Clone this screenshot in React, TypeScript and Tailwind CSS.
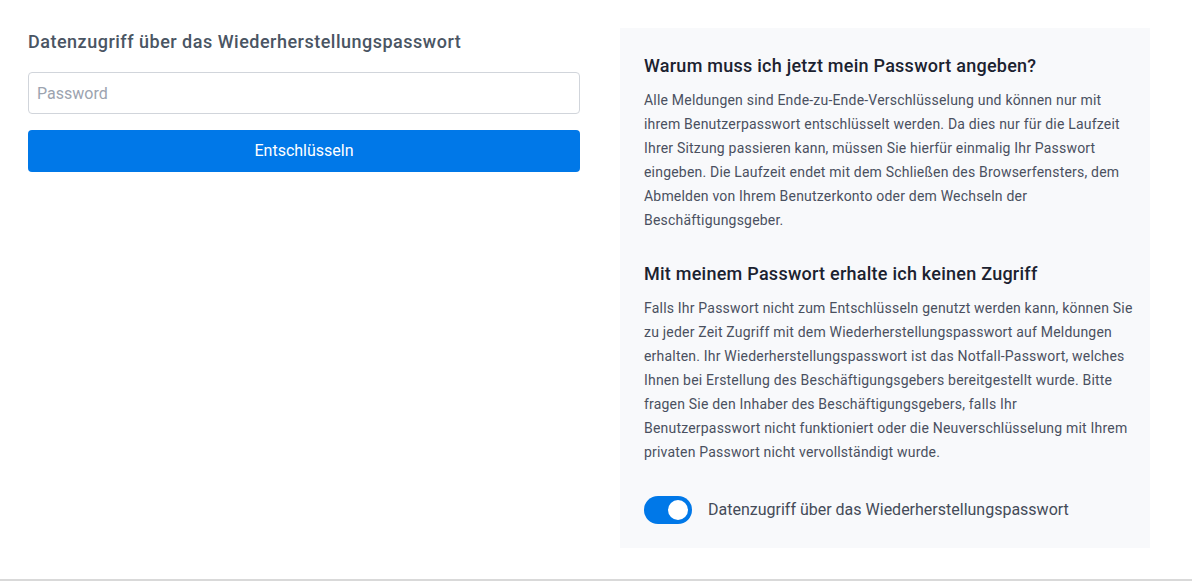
import React, { useState } from "react";

const para1 = [
  "Alle Meldungen sind Ende-zu-Ende-Verschlüsselung und können nur mit",
  "ihrem Benutzerpasswort entschlüsselt werden. Da dies nur für die Laufzeit",
  "Ihrer Sitzung passieren kann, müssen Sie hierfür einmalig Ihr Passwort",
  "eingeben. Die Laufzeit endet mit dem Schließen des Browserfensters, dem",
  "Abmelden von Ihrem Benutzerkonto oder dem Wechseln der",
  "Beschäftigungsgeber.",
];

const para2 = [
  "Falls Ihr Passwort nicht zum Entschlüsseln genutzt werden kann, können Sie",
  "zu jeder Zeit Zugriff mit dem Wiederherstellungspasswort auf Meldungen",
  "erhalten. Ihr Wiederherstellungspasswort ist das Notfall-Passwort, welches",
  "Ihnen bei Erstellung des Beschäftigungsgebers bereitgestellt wurde. Bitte",
  "fragen Sie den Inhaber des Beschäftigungsgebers, falls Ihr",
  "Benutzerpasswort nicht funktioniert oder die Neuverschlüsselung mit Ihrem",
  "privaten Passwort nicht vervollständigt wurde.",
];

function Lines({ lines }: { lines: string[] }) {
  return (
    <p className="text-[14px] leading-[24px] tracking-[0.2px] text-[#4a5060]">
      {lines.map((l, i) => (
        <span key={i} className="block whitespace-nowrap">
          {l}
        </span>
      ))}
    </p>
  );
}

export default function App() {
  const [on, setOn] = useState(true);
  return (
    <div
      className="w-[1192px] h-[581px] bg-white border-b-2 border-[#d9d9d9] box-border"
      style={{ fontFamily: "Roboto, 'Noto Sans', sans-serif" }}
    >
      <div className="flex pt-7 pl-7 gap-10">
        <div className="w-[552px] flex flex-col">
          <h2 className="text-[18px] leading-[28px] font-medium tracking-[0.5px] text-[#4a5563] mb-4">
            Datenzugriff über das Wiederherstellungspasswort
          </h2>
          <input
            type="password"
            placeholder="Password"
            className="h-[42px] w-full rounded border border-[#d1d5db] px-2 text-[16px] text-gray-700 placeholder:text-[#9ca3af] outline-none"
          />
          <button className="mt-4 h-[42px] w-full rounded bg-[#0078e8] text-white text-[16px] leading-[42px]">
            Entschlüsseln
          </button>
        </div>
        <div className="w-[530px] h-[520px] bg-[#f8f9fb] px-6 pt-[24px]">
          <h3 className="text-[18px] leading-[28px] font-medium tracking-[0.25px] text-[#1b2230] mb-2">
            Warum muss ich jetzt mein Passwort angeben?
          </h3>
          <Lines lines={para1} />
          <h3 className="mt-[28px] text-[18px] leading-[28px] font-medium tracking-[0.25px] text-[#1b2230] mb-2">
            Mit meinem Passwort erhalte ich keinen Zugriff
          </h3>
          <Lines lines={para2} />
          <div className="mt-[32px] flex items-center gap-4">
            <button
              onClick={() => setOn(!on)}
              className="relative w-[48px] h-[28px] rounded-full bg-[#0078e8] flex items-center justify-end px-[4px]"
            >
              <span className="block w-[20px] h-[20px] rounded-full bg-white" />
            </button>
            <span className="text-[16px] text-[#444b58]">Datenzugriff über das Wiederherstellungspasswort</span>
          </div>
        </div>
      </div>
    </div>
  );
}
